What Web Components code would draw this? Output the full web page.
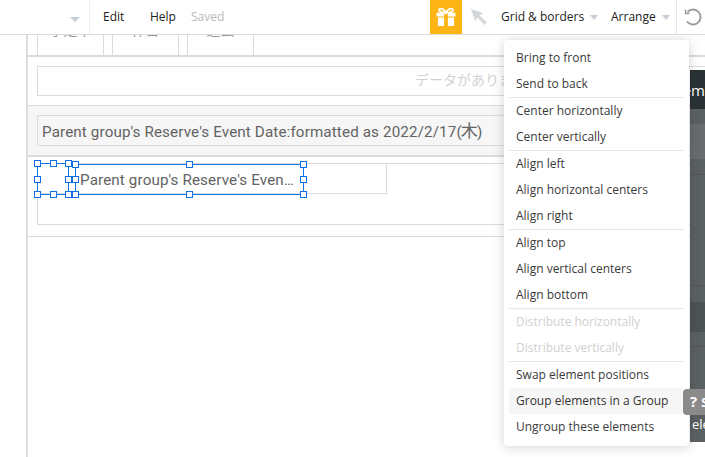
<!DOCTYPE html>
<html lang="ja"><head><meta charset="utf-8"><title>Editor</title>
<style>
html,body{margin:0;padding:0;background:#fff;overflow:hidden}
body{width:705px;height:457px;font-family:"Open Sans",sans-serif}
</style></head><body>
<editor-page>
  <editor-toolbar></editor-toolbar>
  <editor-canvas></editor-canvas>
  <side-panel></side-panel>
  <arrange-menu>
    <menu-group>
      <menu-item>Bring to front</menu-item><menu-item>Send to back</menu-item>
    </menu-group>
    <menu-group>
      <menu-item>Center horizontally</menu-item><menu-item>Center vertically</menu-item>
    </menu-group>
    <menu-group>
      <menu-item>Align left</menu-item><menu-item>Align horizontal centers</menu-item><menu-item>Align right</menu-item>
    </menu-group>
    <menu-group>
      <menu-item>Align top</menu-item><menu-item>Align vertical centers</menu-item><menu-item>Align bottom</menu-item>
    </menu-group>
    <menu-group>
      <menu-item disabled>Distribute horizontally</menu-item><menu-item disabled>Distribute vertically</menu-item>
    </menu-group>
    <menu-group last>
      <menu-item>Swap element positions</menu-item><menu-item hover>Group elements in a Group</menu-item><menu-item>Ungroup these elements</menu-item>
    </menu-group>
  </arrange-menu>
</editor-page>
<script>
function def(name, html, init){
  customElements.define(name, class extends HTMLElement{
    constructor(){super();this.attachShadow({mode:'open'}).innerHTML=html;}
    connectedCallback(){ if(init) init(this); }
  });
}
def('editor-page',`<style>:host{display:block;position:relative;width:705px;height:457px;overflow:hidden;background:#fff}</style><slot></slot>`);

def('tool-caret',`<style>:host{display:block;width:0;height:0;border-left:4px solid transparent;border-right:4px solid transparent;border-top:5px solid #c6ced6}</style>`);

def('editor-toolbar',`<style>
:host{display:flex;position:relative;z-index:3;box-sizing:border-box;height:35px;background:#fff;border-bottom:1px solid #dcdcdc;font:12px/34px "Open Sans",sans-serif;color:#222}
.left{box-sizing:border-box;width:90px;border-right:1px solid #eee;display:flex;justify-content:flex-end;padding:17px 9px 0 0}
.left tool-caret{border-left-width:5px;border-right-width:5px}
.edit{margin-left:13px;width:47px}
.help{width:41px}
.saved{color:#b9b9b9}
.gift{margin-left:auto;width:32px;height:34px;background:#fdb515;display:flex;align-items:center;justify-content:center}
.cursor{box-sizing:border-box;width:39px;display:flex;align-items:center;padding:0 0 0 9px}
.g{width:110px;display:flex;align-items:center}
.a{width:65px;display:flex;align-items:center}
.g span,.a span{margin-right:6px}
.undo{box-sizing:border-box;width:29px;border-left:1px solid #e2e6ea;display:flex;align-items:center;padding-left:7px}
svg{display:block}
</style>
<div class="left"><tool-caret></tool-caret></div>
<div class="edit">Edit</div><div class="help">Help</div><div class="saved">Saved</div>
<div class="gift"><svg width="22" height="18" viewBox="0 0 22 19"><path fill="#fff" d="M1 5h20v4H1zM2.500 10h17v9h-17z"/><rect x="9" y="5" width="4" height="14" fill="#fdb515"/><path fill="none" stroke="#fff" stroke-width="2" d="M11 5C9 1 5-.5 4 1.500S6 5 11 5C16 5 19 3.500 18 1.500S13 1 11 5z"/></svg></div>
<div class="cursor"><svg width="16" height="16" viewBox="0 0 16 16"><path fill="#d5d8db" d="M0 0l12 4-3.500 2.500L16 13.500 13.500 16 6.500 8.500 4 12z"/></svg></div>
<div class="g"><span>Grid &amp; borders</span><tool-caret></tool-caret></div>
<div class="a"><span>Arrange</span><tool-caret></tool-caret></div>
<div class="undo"><svg width="19" height="18" viewBox="0 0 19 18"><path fill="none" stroke="#9a9ea2" stroke-width="2" d="M3.500 4A7.500 7.500 0 1 1 3 13.500"/><path fill="none" stroke="#9a9ea2" stroke-width="1.500" d="M1.500 1.500V5.500H5.500"/></svg></div>`);

def('editor-canvas',`<style>
:host{display:block;position:relative;box-sizing:border-box;margin-left:26px;height:422px;border-left:2px solid #dcdcdc;color:#636363;font:15.2px/20px Roboto,"Noto Sans CJK JP",sans-serif;--ls:.13px}
.tabs{display:flex;gap:8px;padding-left:9px;height:20px;border-bottom:2px solid #dcdcdc;color:#999;font-size:14px}
.tab{box-sizing:border-box;width:67px;height:20px;border:solid #dcdcdc;border-width:0 1px;overflow:hidden;text-align:center;line-height:14px}
.tab span{display:block;margin-top:-13px;font-family:"Noto Sans CJK JP",sans-serif}
.box{box-sizing:border-box;border:1px solid #dcdcdc;margin-left:9px}
.empty{height:30px;margin-top:9px;margin-right:-20px;padding-left:377px;color:#d2d2d2;font:14px/24px "Noto Sans CJK JP",sans-serif;white-space:nowrap;overflow:hidden}
.g{margin-top:9px;box-sizing:border-box;background:#f6f6f6;border-top:1px solid #dcdcdc;border-bottom:2px solid #dcdcdc;padding-top:9px;height:52px}
.g .box{height:31px;padding-left:4px;line-height:30px;white-space:nowrap;overflow:hidden;letter-spacing:var(--ls)}
.g b{font-weight:400;font-size:17px;margin:0 -1px}
.cell{margin-top:6px;height:62px;margin-right:-20px}
.inner{width:350px;height:31px;box-sizing:border-box;margin:-1px;border:1px solid #dcdcdc}
.rule{margin-top:11px;border-top:1px solid #dcdcdc}
.t{position:absolute;left:52px;top:135px;height:20px;width:218px;overflow:hidden;white-space:nowrap;text-overflow:ellipsis;letter-spacing:var(--ls)}
</style>
<div class="tabs"><div class="tab"><span>予定中</span></div><div class="tab"><span>休日</span></div><div class="tab"><span>退去</span></div></div>
<div class="box empty">データがありません</div>
<div class="g"><div class="box">Parent group's Reserve's Event Date:formatted as 2022/2/17(<b>木</b>)</div></div>
<div class="box cell"><div class="inner"></div></div>
<div class="rule"></div>
<div class="t">Parent group's Reserve's Event Date:formatted</div>
<sel-box style="left:9px;top:128px;width:32px;height:32px"></sel-box>
<sel-box style="left:47px;top:129px;width:229px;height:31px"></sel-box>`);

def('sel-box',`<style>
:host{position:absolute;display:block;box-sizing:border-box;border:1px solid #1278e6}
i{position:absolute;box-sizing:border-box;width:7px;height:7px;background:#fff;border:1px solid #0b6fe6;margin:-3.5px 0 0 -3.5px}
</style>`, el=>{
  if(el.shadowRoot.querySelector('i'))return;
  [[0,0],[.5,0],[1,0],[0,.5],[1,.5],[0,1],[.5,1],[1,1]].forEach(([x,y])=>{
    const i=document.createElement('i');
    i.style.left=`calc(-.5px + ${x}*(100% + 1px))`;
    i.style.top=`calc(-.5px + ${y}*(100% + 1px))`;
    el.shadowRoot.appendChild(i);
  });
});

def('side-panel',`<style>
:host{position:absolute;z-index:1;left:690px;top:70px;width:15px;height:372px;background:#5b6063;color:#fff;display:flex;flex-direction:column;overflow:hidden;font:15px/20px "Open Sans",sans-serif}
.head{height:39px;background:#2a3235;display:flex;justify-content:flex-end;align-items:center;white-space:nowrap}
.b1{height:15px}
.b2{height:35px;background:#686c6e}
.b3{height:15px;border-bottom:1px solid #52575a}
.b4{height:110px;border-bottom:1px solid #52575a}
.b5{height:16px}
.b6{height:30px;background:#4d5254}
.b7{height:14px;border-bottom:1px solid #52575a}
.ele{position:absolute;left:2px;top:345px;font-size:13px;line-height:18px}
</style>
<div class="head"><span>em</span></div><div class="b1"></div><div class="b2"></div><div class="b3"></div><div class="b4"></div><div class="b5"></div><div class="b6"></div><div class="b7"></div>
<div class="ele">ele</div>`);

def('arrange-menu',`<style>
:host{position:absolute;z-index:2;left:504px;top:40px;box-sizing:border-box;width:185px;height:406px;padding:5px 5px 6px;background:#fff;border-radius:4px;box-shadow:0 1px 12px rgba(0,0,0,.18)}
.tip{position:absolute;left:179px;top:349px;width:40px;height:26px;box-sizing:border-box;padding-left:7px;border-radius:4px;background:#8a8a8a;color:#fff;font:bold 15px/24px "Open Sans",sans-serif;white-space:nowrap;overflow:hidden}
.tip span{margin-left:4px;font-size:12px}
</style><slot></slot><div class="tip">?<span>S</span></div>`);

def('menu-group',`<style>
:host{display:block;border-bottom:1px solid #e6e6e6}
:host([last]){border-bottom:0}
</style><slot></slot>`);

def('menu-item',`<style>
:host{display:block;box-sizing:border-box;height:26px;padding-left:7px;font:12px/26px "Open Sans",sans-serif;color:#3a3a3a;white-space:nowrap}
:host([disabled]){color:#d0d0d0}
:host([hover]){background:#f6f6f6;color:#333}
</style><slot></slot>`);
</script>
</body></html>
